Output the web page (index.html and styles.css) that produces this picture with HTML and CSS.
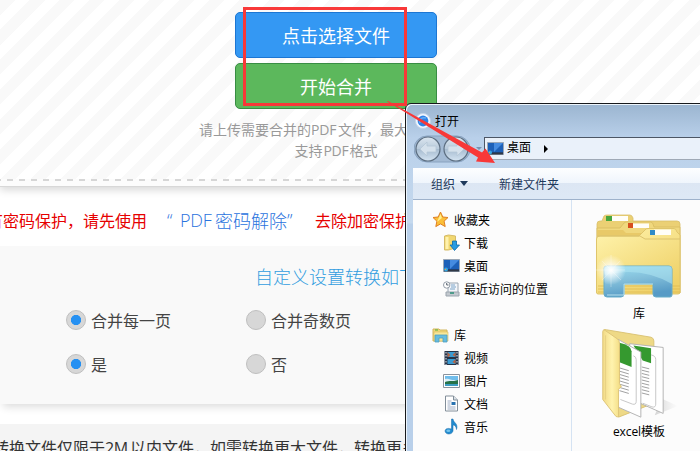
FILE: index.html
```html
<!DOCTYPE html>
<html lang="zh-CN">
<head>
<meta charset="utf-8">
<title>PDF合并</title>
<link rel="stylesheet" href="styles.css">
</head>
<body>
<main class="page">
  <section class="upload">
    <div class="drop">
      <button class="btn btn-blue">点击选择文件</button>
      <button class="btn btn-green">开始合并</button>
      <p class="hint"><span class="line">请上传需要合并的<span class="pdf">PDF</span>文件，最大</span><br>支持<span class="pdf">PDF</span>格式</p>
    </div>
    <div class="dashes"></div>
  </section>
  <p class="notice"><span>有密码保护，请先使用</span><a><span class="open">“</span><span class="link-pdf">PDF</span>密码解除<span class="close">”</span></a><span>去除加密保护</span></p>
  <section class="options">
    <h2>自定义设置转换如下</h2>
    <div class="row">
      <label class="opt"><i class="radio on"></i>合并每一页</label>
      <label class="opt"><i class="radio"></i>合并奇数页</label>
    </div>
    <div class="row">
      <label class="opt"><i class="radio on"></i>是</label>
      <label class="opt"><i class="radio"></i>否</label>
    </div>
  </section>
  <footer class="limits"><p>转换文件仅限于<span class="size">2M</span>以内文件，如需转换更大文件，转换更多</p></footer>
</main>

<div class="dialog">
  <header class="titlebar">
    <svg width="16" height="16" viewBox="0 0 16 16"><circle cx="8" cy="8" r="7.5" fill="#f3f8ff" stroke="#c3d3e8"/><circle cx="8" cy="8" r="5.4" fill="#2f83e6"/><path d="M5 10C4 6 7 4 11 5" fill="none" stroke="#65aaf5" stroke-width="1.500"/></svg>
    <span>打开</span>
  </header>
  <div class="address">
    <svg class="nav" width="70" height="28" viewBox="0 0 70 28">
      <defs><linearGradient id="nv" x2="0" y2="1"><stop offset="0" stop-color="#dce6ef"/><stop offset=".48" stop-color="#b9cbdc"/><stop offset=".5" stop-color="#a5bacf"/><stop offset="1" stop-color="#d5e4f2"/></linearGradient></defs>
      <path d="M13 1H43A13 13 0 0 1 43 27H13A13 13 0 0 1 13 1Z" fill="#a3bad4" stroke="#88a2bf"/>
      <circle cx="14" cy="14" r="12" fill="url(#nv)" stroke="#5c6e81" stroke-width="1.2"/>
      <circle cx="42" cy="14" r="12" fill="url(#nv)" stroke="#5c6e81" stroke-width="1.2"/>
      <path d="M6 14L13 7V11H22V17H13V21Z M50 14L43 7V11H34V17H43V21Z" fill="#d5e1ec" stroke="#b5c6d7" stroke-width=".8"/>
      <path d="M62 12H68L65 15Z" fill="#7992b0"/>
    </svg>
    <div class="field">
      <svg width="17" height="14" viewBox="0 0 17 14"><use href="#desk"/></svg>
      <span>桌面</span>
      <svg class="tri" width="6" height="8" viewBox="0 0 6 8"><path d="M1 0L5 4L1 8Z" fill="#000"/></svg>
    </div>
  </div>
  <div class="toolbar"><span>组织</span><svg width="8" height="5" viewBox="0 0 8 5"><path d="M0 0H8L4 5Z" fill="#1e395b"/></svg><span class="newdir">新建文件夹</span></div>
  <div class="content">
    <nav class="tree">
      <div class="group">
        <div class="item head"><svg width="17" height="17" viewBox="0 0 17 17"><path d="M8.500 1L10.800 6L16 6.500L12.100 10.200L13.200 15.600L8.500 12.900L3.800 15.600L4.900 10.200L1 6.500L6.200 6Z" fill="#fbbf38" stroke="#df7f23"/><path d="M8.500 3L9.900 7L5 11Z" fill="#fff08e"/></svg>收藏夹</div>
        <div class="item"><svg width="16" height="17" viewBox="0 0 16 17"><path d="M1 2L5 1L12 2V14L5 16H1Z" fill="#f1d770" stroke="#d5bb68"/><path d="M2 3H5V15H2Z" fill="#fff2ad"/><path d="M9 7H13V11H16L11 16.500L6.500 11H9Z" fill="#279be1" stroke="#0869a9" stroke-width=".8"/></svg>下载</div>
        <div class="item"><svg width="17" height="14" viewBox="0 0 17 14"><g id="desk"><path d="M.5 .5H16.500V12.500H.5Z" fill="#164b95" stroke="#9aa7b7"/><path d="M1 1H16V10H1Z" fill="#1d60b8"/><path d="M7 1H16L7 10Z" fill="#458be0"/><path d="M1 10.500H16V12.500H1Z" fill="#303846"/><circle cx="3" cy="10.500" r="2" fill="#35a4df"/><path d="M2 10H3V11H2Z" fill="#ff9f35"/></g></svg>桌面</div>
        <div class="item"><svg width="17" height="16" viewBox="0 0 17 16"><path d="M5 2H15V12H5Z" fill="#f3f6fa" stroke="#9aa6b1"/><path d="M8 4H12M8 6H13M7 8H12" stroke="#7ba4c8"/><path d="M3 11H16V15H3Z" fill="#c3c9cf" stroke="#9ca5ae"/><path d="M7 12H11" stroke="#4f9b8b" stroke-width="2"/><circle cx="3.700" cy="4" r="3.200" fill="#fff" stroke="#929ba6"/><path d="M3.700 2V4H5.500" stroke="#56616d" fill="none"/></svg>最近访问的位置</div>
      </div>
      <div class="group">
        <div class="item head"><svg width="17" height="16" viewBox="0 0 17 16"><path d="M1 2H7L8 3H15V14H1Z" fill="#f1d878" stroke="#d3b65f"/><path d="M2 5H16V14H2Z" fill="#f9e899" stroke="#d9ba5f" stroke-width=".6"/><path d="M3 3H6" stroke="#4bad3d"/><path d="M3 15V8H15V15H11V11H7V15Z" fill="#65bce0" stroke="#4d9fc0" stroke-width=".8"/></svg>库</div>
        <div class="item"><svg width="16" height="16" viewBox="0 0 16 16"><path d="M1 1H15V15H1Z" fill="#263348"/><path d="M4 2H12V7H4ZM4 9H12V14H4Z" fill="#3b9bd2"/><path d="M4 2L7 5L5 7H4ZM12 2V7L9 5ZM12 9L9 12L12 14Z" fill="#b76442"/><path d="M2.500 2V15M13.500 2V15" stroke="#e8edf3" stroke-dasharray="1.500 1.500"/></svg>视频</div>
        <div class="item"><svg width="17" height="14" viewBox="0 0 17 14"><path d="M.5 .5H16.500V13.500H.5Z" fill="#fff" stroke="#8a939d"/><path d="M2 2H15V7H2Z" fill="#70bdeb"/><path d="M2 5C7 4 7 7 15 6V9H2Z" fill="#dbeff7"/><path d="M2 8C6 6 10 8 15 6V12H2Z" fill="#277348"/><path d="M2 10H15V12H2Z" fill="#3d9cc1"/></svg>图片</div>
        <div class="item"><svg width="16" height="17" viewBox="0 0 16 17"><path d="M2 1H10L14 5V16H2Z" fill="#fff" stroke="#828e99"/><path d="M10 1V5H14" fill="#dae2e8" stroke="#828e99"/><path d="M4 6H8M4 8H7M4 10H7M4 12H12M4 14H12" stroke="#9fadc5"/><path d="M8 7H12V10H8Z" fill="#2872b0"/></svg>文档</div>
        <div class="item"><svg width="16" height="17" viewBox="0 0 16 17"><path d="M8 1H9.500C10 5 15 5.500 13 11.500C12.500 8 11 7 9.500 7V13C8.500 17 2 17 1.500 13C2 10 5 10 8 11Z" fill="#228bce" stroke="#1269ab" stroke-width=".5"/><ellipse cx="4.800" cy="12.700" rx="2" ry="1.300" fill="#75c4ed"/></svg>音乐</div>
      </div>
    </nav>
    <div class="files">
      <figure>
        <svg width="90" height="88" viewBox="0 0 90 88">
          <defs>
            <linearGradient id="fy" x2=".7" y2="1"><stop stop-color="#fff4ae"/><stop offset="1" stop-color="#efd168"/></linearGradient>
            <linearGradient id="bl" x2=".3" y2="1"><stop stop-color="#9bdff2"/><stop offset=".5" stop-color="#83bfda"/><stop offset="1" stop-color="#579bc6"/></linearGradient>
            <radialGradient id="shine"><stop stop-color="#fff"/><stop offset=".35" stop-color="#fff" stop-opacity=".7"/><stop offset="1" stop-color="#fff" stop-opacity="0"/></radialGradient>
          </defs>
          <path d="M3 14V11Q3 8 6 8H8L10 3Q11 2 13 2H36Q38 2 39 5V8H83Q86 8 86 11V80H3Z" fill="#ebd074" stroke="#d9bf69" stroke-width=".8"/>
          <path d="M3 15H26L30 10Q31 9 33 9H57Q59 9 60 14H86V80H3Z" fill="#f0d87e" stroke="#d7bb60" stroke-width=".8"/>
          <path d="M3 17H29L32 20H86V80H3Z" fill="#e8c968"/>
          <path d="M2.500 26Q2.500 23 6 23H45L51 17Q52 15.500 54 15.500H80Q82 15.500 83 19L86 22V79Q86 81 84 81H4Q2.500 81 2.500 79Z" fill="url(#fy)" stroke="#dfc56c"/>
          <path d="M3 23H46L51 26H86" fill="none" stroke="#dcc36e"/>
          <path d="M17 3H34V8H17ZM38 10.500H55V15H38ZM60 16.500H77V22H60Z" fill="#fffef8"/>
          <path d="M12 3H18V8H12Z" fill="#48a63d"/><path d="M34 10H39V15H34Z" fill="#d74f1e"/><path d="M56 17H61V22H56Z" fill="#2f8bc8"/>
          <path d="M4 73H86M4 76H86M4 79H86" stroke="#deb951" stroke-width=".8"/>
          <path d="M10 81V55Q10 53 13 53H75Q78 53 78 56V82Q78 84 76 84H62Q59 84 59 81V71H30V81Q30 84 27 84H13Q10 84 10 81Z" fill="url(#bl)" stroke="#67acc9"/>
          <path d="M11 62Q47 53 78 71V56Q78 53 75 53H13Q10 53 10 56Z" fill="#aee5f3" opacity=".55"/>
          <path d="M59 71H30V82H13" fill="none" stroke="#b8e1ed"/>
          <circle cx="17" cy="57" r="15" fill="url(#shine)"/><path d="M17 42V74M2 57H31M8 48L27 67M26 48L8 67" stroke="#fff" opacity=".5" stroke-width=".6"/>
        </svg>
        <figcaption>库</figcaption>
      </figure>
      <figure>
        <svg width="90" height="99" viewBox="0 0 90 99">
          <defs><linearGradient id="flap"><stop stop-color="#f2da86"/><stop offset=".5" stop-color="#fff3ae"/><stop offset="1" stop-color="#f1d97d"/></linearGradient><linearGradient id="shadow"><stop stop-color="#bbb" stop-opacity=".6"/><stop offset="1" stop-color="#ccc" stop-opacity="0"/></linearGradient></defs>
          <path d="M62 95L87 85L69 77Z" fill="url(#shadow)"/>
          <path d="M7 4Q7 2 10 3L58 11Q61 12 61 15V82L23 97Z" fill="#eed986" stroke="#d9c172"/>
          <path d="M35 18L71 22V93L35 77Z" fill="#fff" stroke="#b0b0b0"/>
          <path d="M39 20L58 23V39L49 36Z" fill="#35992f"/>
          <path d="M58 30Q63 31 63 35V83Q63 87 59 86L49 82" fill="none" stroke="#c4c4c4"/>
          <path d="M48 43L56 45M48 46.500L56 48.500M48 50L56 52M48 53.500L56 55.500M48 57L56 59M48 60.500L56 62.500M48 64L56 66M48 67.500L56 69.500M48 71L56 73" stroke="#999"/>
          <path d="M22 13L47 27V97L22 86Z" fill="#fff" stroke="#b0b0b0"/>
          <path d="M24 17Q37 20 37 26V43L24 38Z" fill="#35992f"/>
          <path d="M39 31Q42 32 42 35V80Q42 84 38 83L25 78" fill="none" stroke="#c4c4c4"/>
          <path d="M24 44L34 47M24 47.500L34 50.500M24 51L34 54M24 54.500L34 57.500M24 58L34 61M24 61.500L34 64.500M24 65L34 68M24 68.500L34 71.500" stroke="#999"/>
          <path d="M6 5Q6 2 9 4L22 13Q24 14 24 18V61L26 64L23 67V95Q23 98 20 96L6 78Z" fill="url(#flap)" stroke="#dcc376"/>
          <path d="M9 9V78" stroke="#e6d083"/>
        </svg>
        <figcaption><span class="latin">excel</span>模板</figcaption>
      </figure>
    </div>
  </div>
</div>
<svg class="marks" width="700" height="451" viewBox="0 0 700 451"><path d="M244.500 8.500H405.500V104.500H244.500Z" fill="none" stroke="#f83838" stroke-width="3"/><path d="M387 101.500L388 101L482 152.500L485.500 148.500L495 163L476 161.500L478 157.500L403 111Z" fill="#f83838"/></svg>
</body>
</html>
```
FILE: styles.css
```css
* { box-sizing: border-box; }
body { margin: 0; width: 700px; height: 451px; overflow: hidden; position: relative; background: #fff; font-family: "Noto Sans CJK SC", sans-serif; font-weight: 400; }
p, h2, figure { margin: 0; }
.page { height: 451px; overflow: hidden; }
.upload { height: 187px; background: #fcfcfc; border-bottom: 1px solid #d8d8d8; box-shadow: 0 3px 8px #d8d8d8; }
.drop { height: 179px; padding: 12px 28px 0 0; display: flex; flex-direction: column; align-items: center; background: repeating-linear-gradient(135deg, #f9f9f9 0 10.607px, #fff 10.607px 21.213px); }
.btn { width: 202px; height: 46px; padding: 0; margin-bottom: 5px; border-radius: 5px; color: #fff; font: 400 18px/42px "Noto Sans CJK SC", sans-serif; }
.btn-blue { background: #3498f3; border: 1px solid #1c76d3; }
.btn-green { background: #5cb85c; border: 1px solid #388d43; }
.hint { margin-top: 5px; font-size: 14px; line-height: 20px; color: #999; text-align: center; white-space: nowrap; }
.line { display: inline-block; width: 274px; text-align: left; }
.pdf { display: inline-block; width: 27px; font: 14px/20px "Open Sans", sans-serif; letter-spacing: -.2px; }
.dashes { height: 2px; background: repeating-linear-gradient(90deg, #d6d6d6 0 1px, transparent 1px 7px, #d6d6d6 7px 12px, #d6d6d6 12px 12px); }
.notice { height: 50px; margin: 0 0 9px -13px; padding-top: 15px; display: flex; align-items: center; white-space: nowrap; font-size: 16px; line-height: 30px; color: #e60000; }
.notice a { display: flex; width: 168px; padding-left: 20px; font-size: 18px; font-weight: 300; color: #2a73de; }
.open, .link-pdf, .close { font-family: "Open Sans", sans-serif; }
.open { width: 13px; }
.link-pdf { width: 35px; letter-spacing: -.2px; }
.options { height: 158px; padding-top: 16px; background: #f9f9f9; box-shadow: 0 6px 8px -3px #ddd; }
h2 { height: 36px; padding-left: 255px; font-size: 18px; font-weight: 300; line-height: 28px; color: #329de0; }
.row { display: flex; height: 44px; padding-left: 66px; align-items: center; }
.opt { width: 180px; display: flex; align-items: center; gap: 5px; font-size: 16px; line-height: 24px; color: #444; }
.radio { width: 20px; height: 20px; border: 1px solid #bfbfbf; border-radius: 50%; background: #d7d7d7; }
.on { background: radial-gradient(circle, #2590f2 0 4.8px, #d7d7d7 5.4px); }
.limits { margin-top: 20px; height: 40px; padding-top: 11px; background: #f4f4f4; color: #333; font-size: 16px; line-height: 24px; white-space: nowrap; }
.limits p { margin-left: -7px; }
.size { display: inline-block; width: 25px; font-family: "Open Sans", sans-serif; letter-spacing: -.3px; }

.dialog { position: absolute; left: 405px; top: 103px; width: 310px; height: 370px; padding-left: 7px; overflow: hidden; border: 1px solid #17191c; border-radius: 6px 0 0; background: linear-gradient(#9bb5d0 0, #b9d0ea 34px, #c5d9ee 119px, #b9d0ea 120px); box-shadow: inset 1px 1px #edf5fc; color: #000; font-size: 12px; }
.titlebar { display: flex; align-items: center; height: 33px; padding-left: 2px; gap: 4px; }
.titlebar span { line-height: 18px; padding-top: 1px; }
.address { height: 31px; display: flex; align-items: flex-start; }
.nav { margin-top: -2px; margin-left: 1px; }
.field { width: 230px; height: 23px; border: 1px solid #4c5665; border-bottom-color: #9fa9b6; background: #eaf1fa; display: flex; align-items: center; padding: 0 2px; gap: 3px; }
.field span { line-height: 18px; padding-bottom: 3px; }
.tri { margin-left: 9px; }
.toolbar { height: 32px; padding-left: 18px; display: flex; align-items: center; background: linear-gradient(#fdfeff, #eff5fc 15px, #dce6f3 15px, #dde8f5 28px); border-bottom: 1px solid #9eb2cb; color: #1e395b; line-height: 18px; }
.toolbar svg { margin-left: 5px; }
.newdir { margin-left: 31px; }
.content { display: flex; height: 300px; background: #fcfcfc; }
.tree { width: 159px; border-right: 1px solid #d5e3f3; padding-top: 8px; }
.group { margin-bottom: 23px; }
.item { height: 23px; display: flex; align-items: center; gap: 4px; padding-left: 30px; line-height: 18px; white-space: nowrap; }
.item svg { width: 17px; flex: none; }
.item.head { padding-left: 19px; gap: 5px; }
.files { padding: 13px 0 0 22px; width: 140px; }
figure { width: 90px; height: 114px; display: flex; flex-direction: column; align-items: center; }
figcaption { line-height: 18px; margin-top: 3px; white-space: nowrap; }
.latin { font-family: "Open Sans", sans-serif; letter-spacing: -.1px; }
.marks { position: absolute; left: 0; top: 0; pointer-events: none; }
```
